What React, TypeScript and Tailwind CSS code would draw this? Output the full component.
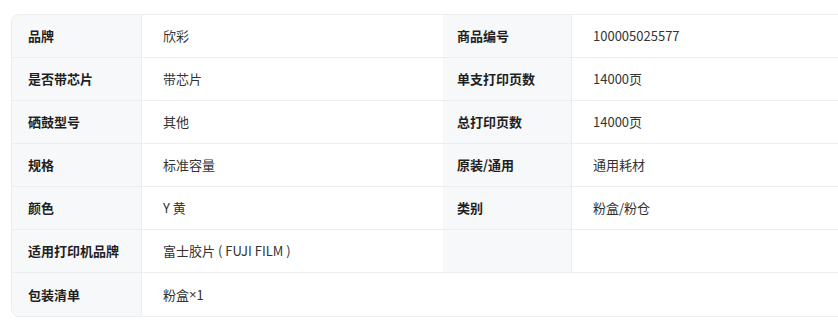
import React from "react";

type Row = { label: string; value: React.ReactNode; label2?: string; value2?: string; full?: boolean };

const rows: Row[] = [
  { label: "品牌", value: "欣彩", label2: "商品编号", value2: "100005025577" },
  { label: "是否带芯片", value: "带芯片", label2: "单支打印页数", value2: "14000页" },
  { label: "硒鼓型号", value: "其他", label2: "总打印页数", value2: "14000页" },
  { label: "规格", value: "标准容量", label2: "原装/通用", value2: "通用耗材" },
  { label: "颜色", value: "Y 黄", label2: "类别", value2: "粉盒/粉仓" },
  { label: "适用打印机品牌", value: "富士胶片 ( FUJI FILM )", label2: "", value2: "" },
  {
    label: "包装清单",
    value: (
      <>
        粉盒<span style={{ fontFamily: '"Liberation Sans", sans-serif' }}>×</span>1
      </>
    ),
    full: true,
  },
];

export default function App() {
  return (
    <div
      className="w-[838px] h-[325px] overflow-hidden bg-white pt-[14px] pl-[11px]"
      style={{ fontFamily: '"Microsoft YaHei", "Noto Sans CJK SC", "Noto Sans", sans-serif' }}
    >
      <div className="w-[860px] rounded-lg border border-[#ebedf0] overflow-hidden text-[13px]">
        <div className="grid grid-cols-[130px_301px_129px_1fr]">
          {rows.map((row, i) => {
            const last = i === rows.length - 1;
            const b = last ? "" : "border-b border-[#ebedf0]";
            return (
              <React.Fragment key={i}>
                <div className={`h-[43px] flex items-center pl-4 bg-[#f7f8fa] border-r border-[#ebedf0] font-semibold text-[#1f1f1f] ${b}`}>
                  {row.label}
                </div>
                {row.full ? (
                  <div className={`col-span-3 h-[43px] flex items-center pl-[21px] text-[#333] ${b}`}>
                    {row.value}
                  </div>
                ) : (
                  <>
                    <div className={`h-[43px] flex items-center pl-[21px] text-[#333] ${b}`}>{row.value}</div>
                    <div className={`h-[43px] flex items-center pl-[14px] bg-[#f7f8fa] border-r border-[#ebedf0] font-semibold text-[#1f1f1f] ${b}`}>
                      {row.label2}
                    </div>
                    <div className={`h-[43px] flex items-center pl-[21px] text-[#333] ${b}`}>{row.value2}</div>
                  </>
                )}
              </React.Fragment>
            );
          })}
        </div>
      </div>
    </div>
  );
}
